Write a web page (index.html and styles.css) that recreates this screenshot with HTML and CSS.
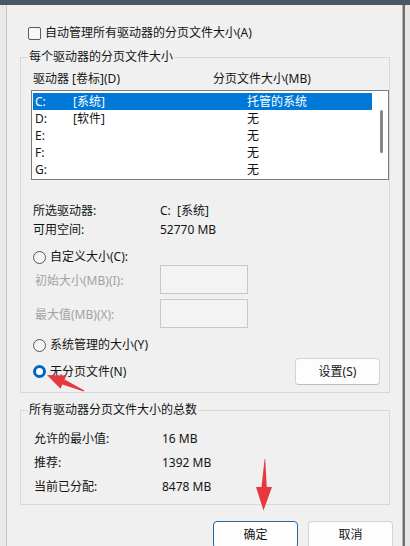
FILE: index.html
```html
<!DOCTYPE html>
<html lang="zh-CN">
<head>
<meta charset="utf-8">
<title>虚拟内存</title>
<link rel="stylesheet" href="styles.css">
</head>
<body>
<div class="topbar"></div>
<div class="frame">
  <div class="edge-left"></div>
  <div class="dialog">
    <div class="check-row"><span class="checkbox"></span><span>自动管理所有驱动器的分页文件大小(A)</span></div>

    <fieldset class="group group-drives">
      <legend>每个驱动器的分页文件大小</legend>
      <div class="list-head"><span class="col-drive">驱动器 [卷标](D)</span><span class="col-size">分页文件大小(MB)</span></div>
      <div class="listbox">
        <div class="rows">
          <div class="row selected"><span class="c-letter">C:</span><span class="c-label">[系统]</span><span class="c-size">托管的系统</span></div>
          <div class="row"><span class="c-letter">D:</span><span class="c-label">[软件]</span><span class="c-size">无</span></div>
          <div class="row"><span class="c-letter">E:</span><span class="c-label"></span><span class="c-size">无</span></div>
          <div class="row"><span class="c-letter">F:</span><span class="c-label"></span><span class="c-size">无</span></div>
          <div class="row"><span class="c-letter">G:</span><span class="c-label"></span><span class="c-size">无</span></div>
        </div>
        <div class="scrollbar"><div class="thumb"></div></div>
      </div>

      <div class="info">
        <span>所选驱动器:</span><span>C:&nbsp;&nbsp;[系统]</span>
        <span>可用空间:</span><span>52770 MB</span>
      </div>

      <div class="radio-row first-radio"><span class="radio"></span><span>自定义大小(C):</span></div>
      <div class="size-row"><span class="size-label">初始大小(MB)(I):</span><span class="edit"></span></div>
      <div class="size-row second"><span class="size-label">最大值(MB)(X):</span><span class="edit"></span></div>
      <div class="radio-row sys-radio"><span class="radio"></span><span>系统管理的大小(Y)</span></div>
      <div class="last-row">
        <div class="radio-row"><span class="radio checked"></span><span>无分页文件(N)</span></div>
        <div class="btn btn-set">设置(S)</div>
      </div>
    </fieldset>

    <fieldset class="group group-total">
      <legend>所有驱动器分页文件大小的总数</legend>
      <div class="totals">
        <span>允许的最小值:</span><span>16 MB</span>
        <span>推荐:</span><span>1392 MB</span>
        <span>当前已分配:</span><span>8478 MB</span>
      </div>
    </fieldset>

    <div class="buttons">
      <div class="btn btn-ok">确定</div>
      <div class="btn btn-cancel">取消</div>
    </div>
  </div>
  <div class="edge-right"></div>
</div>

<svg class="arrows" width="410" height="546" viewBox="0 0 410 546">
  <polygon fill="#e8383d" points="84.4,390.4 64.6,379.6 66.5,375.4 47,375 60.5,388.8 62.4,384.6 83.6,391.6"/>
  <polygon fill="#e8383d" points="265.2,459 266.8,487 272,487 263.5,510.5 256,487 261.5,487 264.6,459"/>
</svg>
</body>
</html>
```

FILE: styles.css
```css
* { box-sizing: border-box; }
html, body { margin: 0; padding: 0; }
body {
  position: relative;
  width: 410px;
  height: 546px;
  overflow: hidden;
  background: #ececec;
  font-family: "Noto Sans", "Noto Sans CJK SC", sans-serif;
  font-size: 12px;
  color: #141414;
}
.topbar { height: 5px; background: #4a5863; }
.frame { display: flex; height: 541px; }
.edge-left { width: 7px; background: #e9e9e9; border-right: 1px solid #c6c6c6; }
.edge-right { width: 7px; background: #e6e6e6; border-left: 2px solid #6e6e6e; }
.dialog {
  width: 396px;
  background: #f0f0f0;
  border-right: 1px solid #b0b0b0;
  padding-top: 20px;
}

.check-row {
  display: flex;
  align-items: center;
  gap: 4px;
  height: 16px;
  line-height: 16px;
  margin-left: 21px;
}
.checkbox {
  width: 13px; height: 13px;
  border: 1px solid #5a5a5a;
  border-radius: 2px;
  background: #f7f7f7;
}

.group {
  margin: 8px 0 0 13px;
  width: 370px;
  min-width: 0;
  border: 1px solid #d8d8d8;
  padding: 6px 0 7px 10px;
}
.group legend {
  margin-left: -3px;
  padding: 0 1px;
  height: 16px;
  line-height: 16px;
}

.list-head { display: flex; height: 16px; line-height: 16px; padding-left: 2px; }
.col-drive { width: 180px; }

.listbox {
  display: flex;
  margin-top: 3px;
  height: 90px;
  border: 1px solid #7c7c7c;
  background: #ffffff;
}
.rows { flex: 1; padding: 2px 0 0 1px; }
.row { display: flex; height: 17px; line-height: 17px; }
.row.selected { background: #0078d7; color: #ffffff; }
.c-letter { width: 40px; padding-left: 2px; }
.c-label { width: 174px; }
.scrollbar { width: 16px; }
.thumb {
  margin: 19px 0 0 8px;
  width: 3px;
  height: 43px;
  border-radius: 2px;
  background: #868686;
}

.info {
  display: grid;
  grid-template-columns: 127px auto;
  line-height: 19px;
  margin-top: 21px;
  padding-left: 2px;
}

.radio-row {
  display: flex;
  align-items: center;
  gap: 4px;
  height: 16px;
  line-height: 16px;
  padding-left: 2px;
}
.first-radio { margin-top: 10px; }
.sys-radio { margin-top: 9px; }
.radio {
  width: 13px; height: 13px;
  border-radius: 50%;
  border: 1px solid #555555;
  background: #f6f6f6;
}
.radio.checked { border: 3.5px solid #0067c0; background: #ffffff; }

.size-row { display: flex; align-items: center; height: 29px; }
.size-row.second { margin-top: 5px; }
.size-label { width: 129px; padding: 3px 0 0 4px; color: #a2a2a2; line-height: 16px; }
.edit {
  width: 88px; height: 29px;
  border: 1px solid #c8c8c8;
  background: #f3f3f3;
}

.last-row {
  display: flex;
  justify-content: space-between;
  align-items: center;
  margin-top: 5px;
  height: 27px;
}

.btn {
  text-align: center;
  background: #fdfdfd;
  border: 1px solid #d3d3d3;
  border-bottom-color: #bdbdbd;
  border-radius: 4px;
}
.btn-set { width: 85px; height: 27px; line-height: 25px; margin-right: 9px; }

.group-total { margin-top: 9px; padding: 9px 0 5px 10px; }
.totals {
  display: grid;
  grid-template-columns: 128px auto;
  line-height: 24px;
  padding-left: 3px;
}

.buttons {
  display: flex;
  justify-content: flex-end;
  gap: 10px;
  margin-top: 16px;
  padding-right: 9px;
}
.btn-ok, .btn-cancel { width: 85px; height: 28px; line-height: 26px; }
.btn-ok { border: 1px solid #2366a8; }

.arrows { position: absolute; left: 0; top: 0; pointer-events: none; }
```
